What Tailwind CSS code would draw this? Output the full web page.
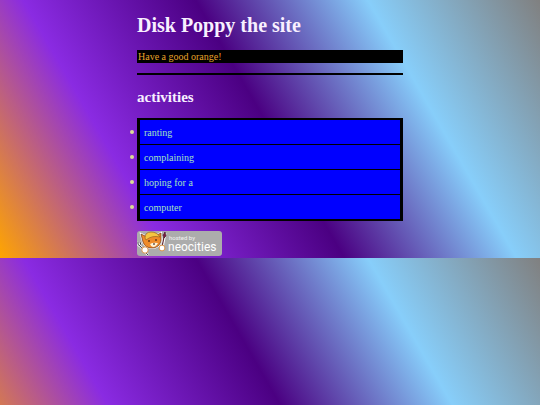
<!DOCTYPE html>
<html lang="en">
<head>
<meta charset="utf-8">
<meta name="viewport" content="width=device-width, initial-scale=1">
<title>Disk Poppy the site</title>
<script src="https://cdn.jsdelivr.net/npm/@tailwindcss/browser@4"></script>
</head>
<body class="bg-[linear-gradient(60deg,orange,blueviolet,indigo,lightskyblue,gray)] font-['Liberation_Serif',serif] text-[10px] leading-[13px]">
<main class="mx-auto flex w-full max-w-[266px] flex-col pt-[13px] pb-0.5">
  <h1 class="text-[20px] leading-6 font-bold text-[#f8f0ff]">Disk Poppy the site</h1>
  <p class="mt-[13px] bg-black px-px text-[#e8a42a]">Have a good orange!</p>
  <hr class="mt-2.5 border-t-2 border-black">
  <h2 class="mt-3.5 text-[15px] leading-4 font-bold text-[#f8f0ff]">activities</h2>
  <ul class="mt-[13px] flex flex-col gap-px border-x-3 border-y-2 border-black bg-black text-[#a6e2c0]">
    <li class="relative bg-[blue] px-1 pt-1.5 pb-[5px] before:absolute before:top-2.5 before:-left-2.5 before:size-1 before:rounded-full before:bg-[#dcdc96]">ranting</li>
    <li class="relative bg-[blue] px-1 pt-1.5 pb-[5px] before:absolute before:top-2.5 before:-left-2.5 before:size-1 before:rounded-full before:bg-[#dcdc96]">complaining</li>
    <li class="relative bg-[blue] px-1 pt-1.5 pb-[5px] before:absolute before:top-2.5 before:-left-2.5 before:size-1 before:rounded-full before:bg-[#dcdc96]">hoping for a</li>
    <li class="relative bg-[blue] px-1 pt-1.5 pb-[5px] before:absolute before:top-2.5 before:-left-2.5 before:size-1 before:rounded-full before:bg-[#dcdc96]">computer</li>
  </ul>
  <a href="#" aria-label="hosted by neocities" class="mt-2.5 self-start">
    <svg class="block" width="85" height="25" viewBox="0 0 85 25">
      <rect width="85" height="25" rx="3" fill="#acacac"/>
      <path d="M4 3L8 5L20 4L24 2L24 10Q22 17 15 17Q8 17 6 11Z" fill="#ef8b29" stroke="#fff" stroke-width="2"/>
      <path d="M4 3L8 5L20 4L24 2L24 10Q22 17 15 17Q8 17 6 11Z" fill="#ef8b29" stroke="#6b3516" stroke-width=".7"/>
      <path d="M8 7Q8 1 14 1Q20 1 23 6Q15 4 9 9Z" fill="#f5c542" stroke="#8b551a" stroke-width=".6"/>
      <path d="M13 13Q16 11 21 12Q19 16 16 16Q14 16 13 13Z" fill="#fff1d6"/>
      <path d="M12 9V11M19 8V10M16 13H18" stroke="#24130e"/>
      <path d="M1 11Q0 14 3 15L11 24M3 11L4 14" fill="none" stroke="#fff" stroke-width="2.2"/>
      <path d="M1 11Q0 14 3 15L11 24M3 11L4 14" fill="none" stroke="#3a3a44"/>
      <path d="M28 2L25 17" stroke="#fff" stroke-width="3"/>
      <path d="M27 6L25 16" stroke="#5a2430" stroke-width="1.2"/>
      <path d="M28 1L29 5L27 7L26 4Z" fill="#7b1740" stroke="#35101e" stroke-width=".6"/>
      <circle cx="8" cy="19" r="3.2" fill="#fff" stroke="#d98a3a" stroke-width=".9"/>
      <circle cx="25" cy="17" r="2.9" fill="#fff" stroke="#d98a3a" stroke-width=".9"/>
      <text x="32" y="9" font-family="Roboto, sans-serif" font-size="6" fill="#f2f2f2">hosted by</text>
      <text x="31" y="20" font-family="Roboto, sans-serif" font-size="12" fill="#fff">neocities</text>
    </svg>
  </a>
</main>
</body>
</html>
